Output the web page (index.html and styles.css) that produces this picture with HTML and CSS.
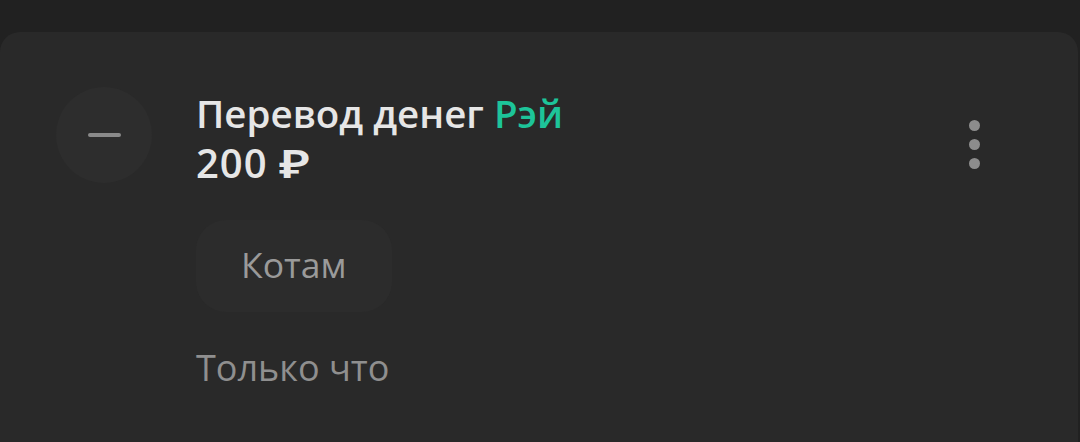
FILE: index.html
```html
<!DOCTYPE html>
<html lang="ru">
<head>
<meta charset="utf-8">
<link rel="stylesheet" href="styles.css">
</head>
<body>
<div class="card">
  <div class="row">
    <div class="avatar"><span class="dash"></span></div>
    <div class="content">
      <div class="title">Перевод денег <span class="name">Рэй</span></div>
      <div class="amount">200 <span class="rub">₽</span></div>
      <div class="chip">Котам</div>
      <div class="time">Только что</div>
    </div>
    <div class="more">
      <span class="dot"></span><span class="dot"></span><span class="dot"></span>
    </div>
  </div>
</div>
</body>
</html>
```
FILE: styles.css
```css
html, body {
  margin: 0;
  padding: 0;
  background: #212121;
  height: 442px;
  overflow: hidden;
}
body {
  padding-top: 32px;
  box-sizing: border-box;
  font-family: "Open Sans", "Noto Sans", sans-serif;
}
.card {
  background: #292929;
  border-radius: 20px 20px 0 0;
  height: 410px;
  margin-right: 2px;
}
.row {
  display: flex;
  align-items: flex-start;
  padding: 55px 0 0 56px;
}
.avatar {
  width: 96px;
  height: 96px;
  border-radius: 50%;
  background: #2d2d2d;
  display: flex;
  align-items: center;
  justify-content: center;
  flex: none;
}
.dash {
  width: 33px;
  height: 4px;
  border-radius: 2px;
  background: #8a8a8a;
}
.content {
  margin-left: 44px;
  flex: 1;
  display: flex;
  flex-direction: column;
  align-items: flex-start;
}
.title, .amount {
  font-size: 38.5px;
  font-weight: 600;
  color: #e6e6e6;
  line-height: 50px;
}
.title {
  margin-top: 1px;
}
.amount {
  font-size: 40px;
  letter-spacing: 1px;
}
.rub {
  display: inline-block;
  transform: scaleX(1.3);
  transform-origin: left center;
}
.name {
  color: #1dc499;
}
.chip {
  margin-top: 32px;
  background: #2c2c2c;
  border-radius: 30px;
  padding: 0 46px 4px 45px;
  height: 92px;
  box-sizing: border-box;
  display: flex;
  align-items: center;
  font-size: 35.5px;
  color: #9a9a9a;
}
.time {
  margin-top: 34px;
  font-size: 36px;
  color: #8f8f8f;
  line-height: 44px;
}
.more {
  display: flex;
  flex-direction: column;
  gap: 8px;
  margin: 33px 98px 0 0;
}
.dot {
  width: 11px;
  height: 11px;
  border-radius: 50%;
  background: #8c8c8c;
}
```
